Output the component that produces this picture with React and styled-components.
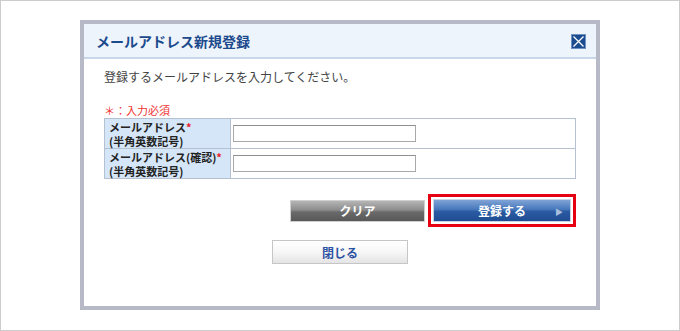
import React from 'react';
import styled, { createGlobalStyle } from 'styled-components';

const GlobalStyle = createGlobalStyle`
  html, body {
    margin: 0;
    padding: 0;
    background: #ffffff;
  }
  body {
    font-family: "Noto Sans CJK JP", "Noto Sans", sans-serif;
    color: #333;
  }
`;

const Page = styled.div`
  width: 680px;
  height: 331px;
  box-sizing: border-box;
  border: 1px solid #cccccc;
  padding-top: 19px;
  display: flex;
  justify-content: center;
`;

const Dialog = styled.div`
  width: 520px;
  height: 290px;
  box-sizing: border-box;
  border: 4px solid #b8b9c6;
  background: #ffffff;
  display: flex;
  flex-direction: column;
`;

const Header = styled.div`
  height: 35px;
  box-sizing: border-box;
  background: #eef4fc;
  border-bottom: 2px solid #c8d6ea;
  display: flex;
  align-items: center;
  justify-content: space-between;
  padding: 0 10px 0 12px;
`;

const Title = styled.h1`
  margin: 0;
  font-size: 14px;
  font-weight: bold;
  color: #1c4a8c;
`;

const CloseButton = styled.button`
  width: 15px;
  height: 15px;
  padding: 0;
  border: none;
  background: none;
  display: block;
  cursor: pointer;
  margin-top: 1px;
`;

const Body = styled.div`
  padding: 8px 20px 0 20px;
  display: flex;
  flex-direction: column;
`;

const Lead = styled.p`
  margin: 0;
  font-size: 12px;
  line-height: 20px;
  color: #444;
`;

const Required = styled.p`
  margin: 16px 0 0;
  font-size: 11px;
  line-height: 14px;
  color: #ee3333;
`;

const FormTable = styled.table`
  width: 472px;
  border-collapse: collapse;
  margin-top: 1px;
`;

const Label = styled.th`
  width: 126px;
  height: 30px;
  box-sizing: border-box;
  background: #d5e6f8;
  border: 1px solid #b5c0d0;
  padding: 0 0 0 4px;
  text-align: left;
  vertical-align: middle;
  font-size: 11px;
  line-height: 14px;
  font-weight: bold;
  white-space: nowrap;
  color: #222;
`;

const Star = styled.span`
  color: #e8202a;
`;

const Field = styled.td`
  border: 1px solid #b5c0d0;
  padding: 0 2px;
  vertical-align: middle;
`;

const TextInput = styled.input`
  display: block;
  width: 183px;
  height: 17px;
  box-sizing: border-box;
  border: 1px solid #a9a9a9;
  border-top-color: #8f8f8f;
  padding: 0 3px;
  font-size: 12px;
`;

const ActionRow = styled.div`
  display: flex;
  justify-content: flex-end;
  align-items: center;
  gap: 3px;
  margin-top: 15px;
`;

const Button = styled.button`
  position: relative;
  box-sizing: border-box;
  width: ${p => p.$width}px;
  height: ${p => p.$height}px;
  padding: 0;
  font-family: inherit;
  font-size: 12px;
  font-weight: bold;
  cursor: pointer;
  border: 1px solid ${p => p.$border};
  color: ${p => p.$color};
  background: ${p => p.$bg};
`;

const Highlight = styled.div`
  border: 3px solid #e60012;
  padding: 2px;
  display: flex;
`;

const Arrow = styled.span`
  position: absolute;
  right: 7px;
  top: 50%;
  transform: translateY(-50%);
  font-size: 8px;
  color: #a9bedc;
`;

const CloseRow = styled.div`
  display: flex;
  justify-content: center;
  margin-top: 13px;
`;

const grayBg = 'linear-gradient(180deg, #b5b5b5 0%, #8c8c8c 45%, #6a6a6a 55%, #585858 100%)';
const blueBg = 'linear-gradient(180deg, #7fa3d6 0%, #4677bb 45%, #2a5aa2 55%, #1f4d93 100%)';
const lightBg = 'linear-gradient(180deg, #ffffff 0%, #f7f7f7 50%, #e4e4e4 100%)';

const CloseIcon = () => (
  <svg width="15" height="15" viewBox="0 0 15 15">
    <rect x="0.5" y="0.5" width="14" height="14" fill="#1b4c90" stroke="#6f92c4" />
    <path d="M2.5 2.5 L12.5 12.5 M12.5 2.5 L2.5 12.5" stroke="#ffffff" strokeWidth="1.3" />
  </svg>
);

const App = () => {
  return (
    <>
      <GlobalStyle />
      <Page>
        <Dialog>
          <Header>
            <Title>メールアドレス新規登録</Title>
            <CloseButton aria-label="閉じる">
              <CloseIcon />
            </CloseButton>
          </Header>
          <Body>
            <Lead>登録するメールアドレスを入力してください。</Lead>
            <Required>＊：入力必須</Required>
            <FormTable>
              <tbody>
                <tr>
                  <Label>
                    メールアドレス<Star>*</Star>
                    <br />
                    (半角英数記号)
                  </Label>
                  <Field>
                    <TextInput type="text" />
                  </Field>
                </tr>
                <tr>
                  <Label>
                    メールアドレス(確認)<Star>*</Star>
                    <br />
                    (半角英数記号)
                  </Label>
                  <Field>
                    <TextInput type="text" />
                  </Field>
                </tr>
              </tbody>
            </FormTable>
            <ActionRow>
              <Button $width={135} $height={22} $border="#d0d0d0" $color="#ffffff" $bg={grayBg}>
                クリア
              </Button>
              <Highlight>
                <Button $width={138} $height={23} $border="#c9d3e3" $color="#ffffff" $bg={blueBg}>
                  登録する
                  <Arrow>▶</Arrow>
                </Button>
              </Highlight>
            </ActionRow>
            <CloseRow>
              <Button $width={136} $height={24} $border="#c6c6c6" $color="#2d53a3" $bg={lightBg}>
                閉じる
              </Button>
            </CloseRow>
          </Body>
        </Dialog>
      </Page>
    </>
  );
};

export default App;
